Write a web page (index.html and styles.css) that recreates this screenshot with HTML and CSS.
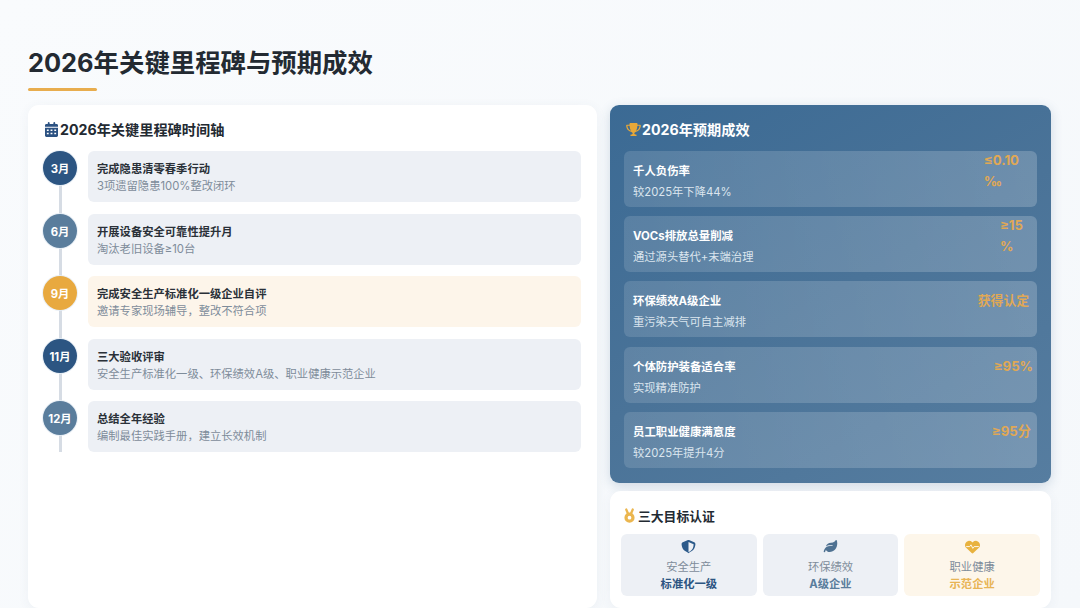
FILE: index.html
```html
<!DOCTYPE html>
<html lang="zh-CN">
<head>
<meta charset="utf-8">
<title>2026年关键里程碑与预期成效</title>
<link rel="stylesheet" href="styles.css">
</head>
<body>
<div class="page">
  <header class="head">
    <h1 class="page-title">2026年关键里程碑与预期成效</h1>
    <div class="accent"></div>
  </header>
  <main class="columns">
    <section class="card timeline-card">
      <h2 class="card-title">
        <svg class="ico-cal" viewBox="0 0 448 512"><path fill="#2c5282" d="M128 0c18 0 32 14 32 32v32h128V32c0-18 14-32 32-32s32 14 32 32v32h48c26 0 48 22 48 48v48H0v-48c0-26 22-48 48-48h48V32c0-18 14-32 32-32zM0 192h448v272c0 26-22 48-48 48H48c-26 0-48-22-48-48V192zm64 64v48h64v-48H64zm128 0v48h64v-48h-64zm128 0v48h64v-48h-64zM64 368v48h64v-48H64zm128 0v48h64v-48h-64zm128 0v48h64v-48h-64z"/></svg>
        <span>2026年关键里程碑时间轴</span>
      </h2>
      <div class="timeline">
        <div class="row"><div class="dot dot-dark">3月</div><div class="event"><div class="ev-title">完成隐患清零春季行动</div><div class="ev-desc">3项遗留隐患100%整改闭环</div></div></div>
        <div class="row"><div class="dot dot-mid">6月</div><div class="event"><div class="ev-title">开展设备安全可靠性提升月</div><div class="ev-desc">淘汰老旧设备≥10台</div></div></div>
        <div class="row"><div class="dot dot-gold">9月</div><div class="event event-warm"><div class="ev-title">完成安全生产标准化一级企业自评</div><div class="ev-desc">邀请专家现场辅导，整改不符合项</div></div></div>
        <div class="row"><div class="dot dot-dark">11月</div><div class="event"><div class="ev-title">三大验收评审</div><div class="ev-desc">安全生产标准化一级、环保绩效A级、职业健康示范企业</div></div></div>
        <div class="row"><div class="dot dot-mid">12月</div><div class="event"><div class="ev-title">总结全年经验</div><div class="ev-desc">编制最佳实践手册，建立长效机制</div></div></div>
      </div>
    </section>
    <div class="side">
      <section class="results">
        <h2 class="card-title results-title">
          <svg class="ico-trophy" viewBox="0 0 576 512"><path fill="#e8a838" d="M400 0H176c-27 0-49 22-48 48l1 16H24C11 64 0 75 0 88c0 93 34 157 79 200 45 42 99 63 139 74 24 7 38 26 38 42 0 19-15 44-40 44h-24c-18 0-32 14-32 32s14 32 32 32h192c18 0 32-14 32-32s-14-32-32-32h-24c-25 0-40-25-40-44 0-16 14-35 38-42 40-11 94-32 139-74 45-43 79-107 79-200 0-13-11-24-24-24H447l1-16c1-26-21-48-48-48zM49 112h84c9 90 29 150 52 190-25-11-51-26-73-48-31-29-56-72-63-142zm415 142c-22 22-48 37-73 48 23-40 43-100 52-190h84c-7 70-32 113-63 142z"/></svg>
          <span>2026年预期成效</span>
        </h2>
        <div class="result-list">
          <div class="result"><div class="res-text"><div class="res-title">千人负伤率</div><div class="res-desc">较2025年下降44%</div></div><div class="res-value gap-18"><span>≤0.10</span><span>‰</span></div></div>
          <div class="result"><div class="res-text"><div class="res-title">VOCs排放总量削减</div><div class="res-desc">通过源头替代+末端治理</div></div><div class="res-value gap-14"><span>≥15</span><span>%</span></div></div>
          <div class="result"><div class="res-text"><div class="res-title">环保绩效A级企业</div><div class="res-desc">重污染天气可自主减排</div></div><div class="res-value gap-8 res-word"><span>获得认定</span></div></div>
          <div class="result"><div class="res-text"><div class="res-title">个体防护装备适合率</div><div class="res-desc">实现精准防护</div></div><div class="res-value gap-4"><span>≥95%</span></div></div>
          <div class="result"><div class="res-text"><div class="res-title">员工职业健康满意度</div><div class="res-desc">较2025年提升4分</div></div><div class="res-value gap-6"><span>≥95分</span></div></div>
        </div>
      </section>
      <section class="card certs">
        <h2 class="certs-title">
          <svg class="ico-medal" viewBox="0 0 20 28"><path fill="none" stroke="#ebb64f" stroke-width="4.5" stroke-linecap="round" d="M4 3l3 7M16 3l-3 7"/><circle cx="10" cy="18" r="6.5" fill="none" stroke="#ebb64f" stroke-width="6"/></svg>
          <span>三大目标认证</span>
        </h2>
        <div class="cert-grid">
          <div class="cert">
            <svg class="cert-ico" viewBox="0 0 512 512"><path fill="#2c5a8a" fill-rule="evenodd" d="M256 0c6 0 12 1 18 4l176 75c24 10 42 33 42 61-1 70-30 198-150 256-32 16-60 36-86 60-26-24-54-44-86-60C50 338 21 210 20 140c0-28 18-51 42-61L238 4c6-3 12-4 18-4zm0 70v350c18-13 38-26 58-36 92-46 114-150 116-236L256 70z" /></svg>
            <div class="cert-label">安全生产</div>
            <div class="cert-value cv-dark">标准化一级</div>
          </div>
          <div class="cert">
            <svg class="cert-ico" viewBox="0 0 512 512"><path fill="#4f7292" d="M272 96c-79 0-146 50-171 121 35-25 80-41 135-41h80c9 0 16 7 16 16s-7 16-16 16h-80c-86 0-147 42-180 96-14 23-24 52-31 80-4 14 5 29 19 32 15 4 29-5 33-20 5-19 12-38 21-55 27 41 74 69 126 69 155 0 263-130 263-300 0-35-8-74-25-110-5-11-20-11-26 0-20 40-63 96-164 96z"/></svg>
            <div class="cert-label">环保绩效</div>
            <div class="cert-value cv-mid">A级企业</div>
          </div>
          <div class="cert cert-warm">
            <svg class="cert-ico" viewBox="0 0 512 512"><path fill="#e8b23f" d="M228 446L47 277C17 250 0 210 0 169c0-69 49-127 117-139 45-7 91 7 123 40l16 16 16-16c32-33 78-47 123-40 68 12 117 70 117 139 0 41-17 81-47 108L284 446c-8 7-18 11-28 11s-20-4-28-11z"/><path fill="none" stroke="#fdf6ea" stroke-width="34" stroke-linejoin="round" d="M40 225h120l44-60 62 120 46-60h160"/></svg>
            <div class="cert-label">职业健康</div>
            <div class="cert-value cv-gold">示范企业</div>
          </div>
        </div>
      </section>
    </div>
  </main>
</div>
</body>
</html>
```

FILE: styles.css
```css
* { box-sizing: border-box; margin: 0; padding: 0; }
html, body { width: 1080px; height: 608px; overflow: hidden; }
body {
  font-family: Inter, "Noto Sans CJK SC", sans-serif;
  color: #222b36;
  background: linear-gradient(135deg, #f9fbfd 0%, #f5f8fb 100%);
}
.page { width: 1080px; height: 608px; padding: 46px 29px 0 28px; display: flex; flex-direction: column; }
.head { height: 59px; flex: none; }
.page-title { font-size: 25.4px; line-height: 34px; font-weight: 700; color: #232a32; }
.accent { width: 69px; height: 3px; margin-top: 8px; background: #e8ad4e; border-radius: 2px; }
.columns { flex: 1; display: grid; grid-template-columns: 569px 441px; column-gap: 13px; min-height: 0; }
.card { background: #fff; border-radius: 11px; box-shadow: 0 2px 12px rgba(60, 90, 120, .06); }
.timeline-card { padding: 14px 16px 0 15px; }
.card-title { display: flex; align-items: center; gap: 2px; font-size: 14.2px; line-height: 22px; font-weight: 700; color: #232a32; padding-left: 2px; }
.ico-cal { width: 13px; height: 15px; flex: none; margin-top: -2px; }
.timeline { position: relative; margin-top: 10px; display: flex; flex-direction: column; gap: 11.5px; }
.timeline::before { content: ""; position: absolute; left: 16px; top: 20px; bottom: 0; width: 3px; background: #d6dce4; }
.row { position: relative; display: flex; gap: 11px; height: 51px; }
.dot { width: 34px; height: 34px; flex: none; border-radius: 50%; display: flex; align-items: center; justify-content: center; color: #fff; font-size: 11.3px; font-weight: 700; box-shadow: 0 0 0 1px rgba(230, 238, 245, .8); }
.dot-dark { background: #2c5582; }
.dot-mid { background: #5a7d9c; }
.dot-gold { background: #e8a93f; }
.event { flex: 1; border-radius: 6px; background: #edf0f5; padding: 10px 9px 0; }
.event-warm { background: #fdf5ea; }
.ev-title { font-size: 11.3px; line-height: 17px; font-weight: 700; color: #2a3038; }
.ev-desc { font-size: 11.3px; line-height: 17px; color: #7e8c9a; }
.side { display: flex; flex-direction: column; gap: 8px; min-height: 0; }
.results { height: 378px; flex: none; padding: 14px 14px 0; border-radius: 9px; background: linear-gradient(150deg, #3b6a94 0%, #4a7398 50%, #567da0 100%); box-shadow: 0 3px 12px rgba(50, 90, 130, .2); }
.results-title { color: #fff; padding-left: 2px; gap: 1px; }
.ico-trophy { width: 15px; height: 13px; flex: none; margin-top: -2px; }
.result-list { margin-top: 10px; display: flex; flex-direction: column; gap: 9.2px; }
.result { height: 56px; display: flex; justify-content: space-between; align-items: flex-start; padding: 10px 0 0 9px; border-radius: 6px; background: linear-gradient(90deg, rgba(255, 255, 255, .13), rgba(255, 255, 255, .2)); }
.res-title { font-size: 11.4px; line-height: 21px; font-weight: 700; color: #fff; }
.res-desc { font-size: 11.3px; line-height: 21px; color: #dbe5ee; }
.res-value { height: 19px; display: flex; flex-direction: column; justify-content: center; font-size: 13.2px; line-height: 21px; font-weight: 700; color: #e0a855; }
.res-word { font-size: 12.8px; }
.gap-18 { margin-right: 18px; }
.gap-14 { margin-right: 14px; }
.gap-8 { margin-right: 8px; }
.gap-4 { margin-right: 4px; }
.gap-6 { margin-right: 6px; }
.certs { flex: 1; padding: 15px 11px 0; display: flex; flex-direction: column; }
.certs-title { display: flex; align-items: center; gap: 3px; padding-left: 3px; font-size: 12.8px; line-height: 22px; font-weight: 700; color: #232a32; }
.ico-medal { width: 11px; height: 15px; flex: none; margin-top: -3px; }
.cert-grid { margin-top: 6px; display: grid; grid-template-columns: repeat(3, 1fr); gap: 6px; }
.cert { height: 62px; border-radius: 6px; background: #edf0f5; display: flex; flex-direction: column; align-items: center; padding-top: 6px; }
.cert-warm { background: #fdf6ea; }
.cert-ico { width: 15px; height: 15px; flex: none; }
.cert-label { margin-top: 4px; font-size: 11.3px; line-height: 17px; color: #7e8c9a; }
.cert-value { font-size: 11.3px; line-height: 17px; font-weight: 700; }
.cv-dark { color: #2c5582; }
.cv-mid { color: #5a7d9c; }
.cv-gold { color: #e8b455; }
```
